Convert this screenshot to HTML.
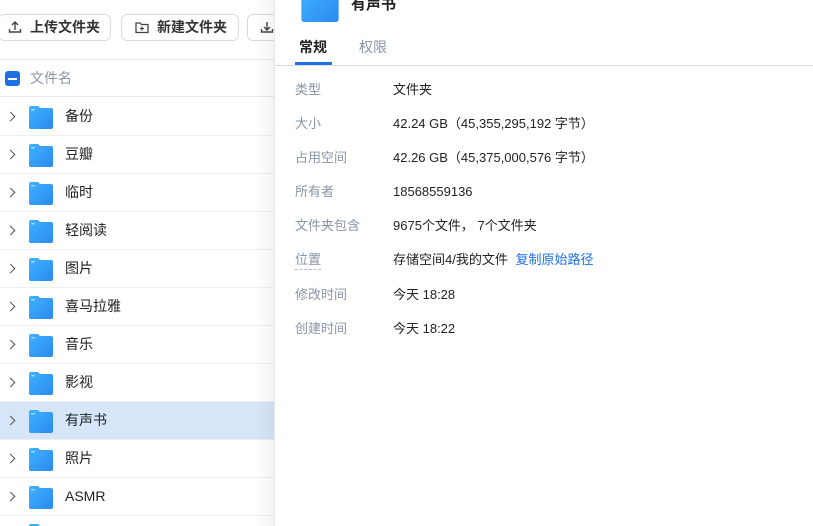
<!DOCTYPE html><html style="overflow:hidden"><head><meta charset="utf-8"><style>
body{margin:0;width:813px;height:526px;overflow:hidden;background:#fff;font-family:"Liberation Sans","Noto Sans CJK SC",sans-serif;position:relative;line-height:18px}
.left{position:absolute;left:0;top:0;width:275px;height:526px;background:#fff;overflow:hidden}
.sh{position:absolute;left:255px;top:0;width:20px;height:526px;background:linear-gradient(90deg,rgba(0,0,0,0),rgba(0,0,0,0.05))}
.btn{position:absolute;top:14px;height:27px;border:1px solid #d6dae0;border-radius:6px;box-sizing:border-box;font-size:14px;font-weight:bold;color:#333;line-height:25px;white-space:nowrap}
.hdr{position:absolute;left:0;top:59px;width:275px;height:38px;border-top:1px solid #e6e8eb;border-bottom:1px solid #e6e8eb;box-sizing:border-box}
.row{position:absolute;left:0;width:275px;height:38px;border-bottom:1px solid #eceef0;box-sizing:border-box;font-size:14px;color:#222}
.row .ar{position:absolute;left:7px;top:15px;width:6px;height:6px;border-right:1.5px solid #555;border-top:1.5px solid #555;transform:rotate(45deg)}
.fold{position:absolute;left:29px;top:8px;width:24px;height:23px}
.row .t{position:absolute;left:65px;top:9px;line-height:18px}
.right{position:absolute;left:275px;top:0;width:538px;height:526px}
.lab{position:absolute;left:20px;font-size:13px;color:#8a94a6;line-height:18px}
.val{position:absolute;left:118px;font-size:13px;color:#222;white-space:nowrap;line-height:18px}
</style></head><body>
<div class="left">
<div class="btn" style="left:-2px;width:113px;padding-left:9px"><svg width="14" height="14" viewBox="0 0 14 14" style="vertical-align:-2px;margin-right:8px"><path d="M7 10V2M4 5l3-3 3 3M1.5 9v3h11V9" fill="none" stroke="#444" stroke-width="1.4"/></svg>上传文件夹</div>
<div class="btn" style="left:121px;width:118px;padding-left:13px"><svg width="14" height="13" viewBox="0 0 14 13" style="vertical-align:-2px;margin-right:8px"><path d="M1 2h4l1.5 1.5H13V11.5H1z" fill="none" stroke="#444" stroke-width="1.3"/><path d="M7 5.5v4M5 7.5h4" stroke="#444" stroke-width="1.2"/></svg>新建文件夹</div>
<div class="btn" style="left:247px;width:60px;padding-left:12px"><svg width="14" height="14" viewBox="0 0 14 14" style="vertical-align:-2px"><path d="M7 2v8M4 7l3 3 3-3M1.5 9v3h11V9" fill="none" stroke="#444" stroke-width="1.4"/></svg></div>
<div class="hdr"><div style="position:absolute;left:5px;top:11px;width:15px;height:15px;border-radius:3px;background:#1f6fe5"><div style="position:absolute;left:3px;top:6.5px;width:9px;height:2px;background:#fff"></div></div><span style="position:absolute;left:30px;top:9px;font-size:14px;color:#8a94a6">文件名</span></div>
<div class="row" style="top:98px"><i class="ar"></i><svg class="fold"><use href="#f"/></svg><span class="t">备份</span></div>
<div class="row" style="top:136px"><i class="ar"></i><svg class="fold"><use href="#f"/></svg><span class="t">豆瓣</span></div>
<div class="row" style="top:174px"><i class="ar"></i><svg class="fold"><use href="#f"/></svg><span class="t">临时</span></div>
<div class="row" style="top:212px"><i class="ar"></i><svg class="fold"><use href="#f"/></svg><span class="t">轻阅读</span></div>
<div class="row" style="top:250px"><i class="ar"></i><svg class="fold"><use href="#f"/></svg><span class="t">图片</span></div>
<div class="row" style="top:288px"><i class="ar"></i><svg class="fold"><use href="#f"/></svg><span class="t">喜马拉雅</span></div>
<div class="row" style="top:326px"><i class="ar"></i><svg class="fold"><use href="#f"/></svg><span class="t">音乐</span></div>
<div class="row" style="top:364px"><i class="ar"></i><svg class="fold"><use href="#f"/></svg><span class="t">影视</span></div>
<div class="row" style="top:402px;background:#d6e5f8"><i class="ar"></i><svg class="fold"><use href="#f"/></svg><span class="t">有声书</span></div>
<div class="row" style="top:440px"><i class="ar"></i><svg class="fold"><use href="#f"/></svg><span class="t">照片</span></div>
<div class="row" style="top:478px"><i class="ar"></i><svg class="fold"><use href="#f"/></svg><span class="t">ASMR</span></div>
<div class="row" style="top:516px;height:10px;border:0;overflow:hidden"><svg class="fold"><use href="#f"/></svg></div>
<div class="sh"></div>
</div>
<div style="position:absolute;left:274px;top:0;width:1px;height:526px;background:#e3e5e8"></div>
<div class="right">
<svg style="position:absolute;left:25px;top:-14px" width="40" height="36" viewBox="0 0 24 23"><use href="#f"/></svg>
<div style="position:absolute;left:76px;top:-4px;font-size:15px;font-weight:bold;color:#222">有声书</div>
<div style="position:absolute;left:24px;top:38px;font-size:14px;font-weight:bold;color:#222">常规</div>
<div style="position:absolute;left:84px;top:38px;font-size:14px;color:#8a94a6">权限</div>
<div style="position:absolute;left:20px;top:62px;width:37px;height:3px;background:#1f6fe5"></div>
<div style="position:absolute;left:0;top:65px;width:538px;height:1px;background:#d8dce2"></div>
<div class="lab" style="top:81px">类型</div><div class="val" style="top:81px">文件夹</div>
<div class="lab" style="top:115px">大小</div><div class="val" style="top:115px">42.24 GB（45,355,295,192 字节）</div>
<div class="lab" style="top:149px">占用空间</div><div class="val" style="top:149px">42.26 GB（45,375,000,576 字节）</div>
<div class="lab" style="top:183px">所有者</div><div class="val" style="top:183px">18568559136</div>
<div class="lab" style="top:217px">文件夹包含</div><div class="val" style="top:217px">9675个文件， 7个文件夹</div>
<div class="lab" style="top:251px;border-bottom:1px dashed #b0b8c6;height:18px">位置</div><div class="val" style="top:251px">存储空间4/我的文件 <span style="color:#1f6fe5;margin-left:4px">复制原始路径</span></div>
<div class="lab" style="top:286px">修改时间</div><div class="val" style="top:286px">今天 18:28</div>
<div class="lab" style="top:320px">创建时间</div><div class="val" style="top:320px">今天 18:22</div>
</div>
<svg width="0" height="0" style="position:absolute"><defs>
<linearGradient id="g" x1="0" y1="0" x2="1" y2="1"><stop offset="0" stop-color="#3fb2ff"/><stop offset="1" stop-color="#2b8af0"/></linearGradient>
<symbol id="f" viewBox="0 0 24 23"><path d="M2 0h7l2 2h11a2 2 0 0 1 2 2v17a2 2 0 0 1-2 2H2a2 2 0 0 1-2-2V2a2 2 0 0 1 2-2z" fill="url(#g)"/><rect x="2" y="3" width="4" height="1.5" rx=".7" fill="#9fdcff"/></symbol>
</defs></svg>
</body></html>
